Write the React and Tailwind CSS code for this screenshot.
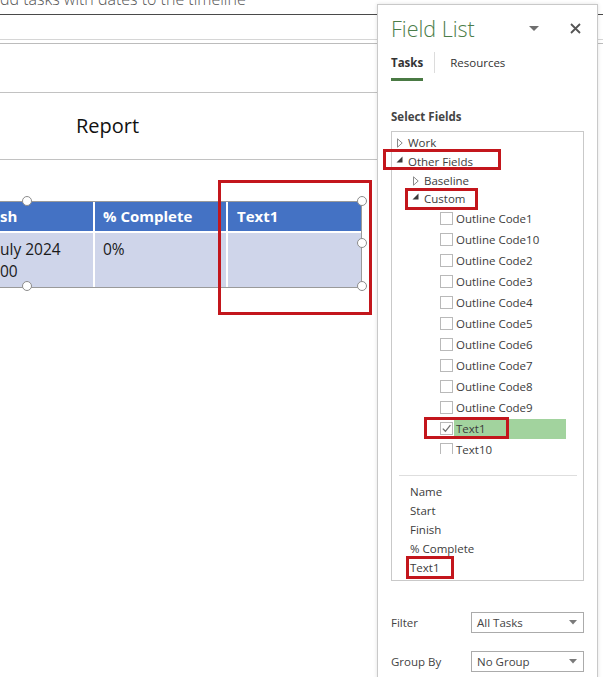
import React from "react";

const Tri = () => (
  <svg width="6" height="10" viewBox="0 0 6 10" className="block">
    <path d="M0.5 0.8 L5.2 5 L0.5 9.2 Z" fill="white" stroke="#8a8a8a" strokeWidth="1" />
  </svg>
);
const TriDown = () => (
  <svg width="7" height="7" viewBox="0 0 7 7" className="block">
    <polygon points="6.5,0.5 6.5,6.5 0.5,6.5" fill="#3a3a3a" />
  </svg>
);

const Check = ({ checked }) => (
  <div className="w-[13px] h-[13px] border border-[#b9b9b9] bg-white flex items-center justify-center shrink-0">
    {checked && (
      <svg width="11" height="11" viewBox="0 0 11 11">
        <path d="M1.8 5.6 L4.4 8.3 L9.4 2.2" fill="none" stroke="#6f6f6f" strokeWidth="1.3" />
      </svg>
    )}
  </div>
);

const RedBox = ({ className }) => (
  <div className={"absolute border-[3px] border-[#c3161c] pointer-events-none z-10 " + className} />
);

const Handle = ({ className }) => (
  <div className={"absolute w-[10px] h-[10px] rounded-full bg-white border border-[#8c8c8c] " + className} />
);

function Selector({ label, value }) {
  return (
    <div className="flex items-center">
      <div className="w-[80px] text-[11.5px] text-[#444]">{label}</div>
      <div className="w-[113px] h-[21px] border border-[#ababab] flex items-center pl-[5px] pr-[6px]">
        <span className="text-[11.5px] text-[#444]">{value}</span>
        <svg className="ml-auto" width="8" height="5" viewBox="0 0 8 5">
          <polygon points="0,0 8,0 4,4.5" fill="#7a7a7a" />
        </svg>
      </div>
    </div>
  );
}

export default function App() {
  const codes = [
    "Outline Code1",
    "Outline Code10",
    "Outline Code2",
    "Outline Code3",
    "Outline Code4",
    "Outline Code5",
    "Outline Code6",
    "Outline Code7",
    "Outline Code8",
    "Outline Code9",
  ];
  return (
    <div className="w-[603px] h-[677px] overflow-hidden bg-white flex font-['Open_Sans',sans-serif]">
      {/* Left document area */}
      <div className="w-[377px] shrink-0 relative flex flex-col">
        <div className="h-[15px] overflow-hidden border-b border-[#4a4a4a]">
          <div className="mt-[-11px] text-[16px] leading-[20px] font-light text-[#555] whitespace-nowrap">
            dd tasks with dates to the timeline
          </div>
        </div>
        <div className="h-[24px]" />
        <div className="h-[5px] border-t border-b border-t-[#d6d6d6] border-b-[#bcbcbc]" />
        <div className="h-[48px]" />
        <div className="h-[67px] border-t border-[#c2c2c2] flex items-center pl-[76px]">
          <span className="text-[20px] text-[#111]">Report</span>
        </div>
        <div className="border-t border-[#c2c2c2] pt-[41px]">
          <div className="relative w-[362px] border border-l-0 border-[#9a9a9a] bg-white">
            <div className="flex gap-[2px] h-[29px]">
              <div className="w-[93px] bg-[#4472c4] text-white font-bold text-[15px] flex items-center">sh</div>
              <div className="w-[131px] bg-[#4472c4] text-white font-bold text-[15px] flex items-center pl-[8px]">% Complete</div>
              <div className="w-[133px] bg-[#4472c4] text-white font-bold text-[15px] flex items-center pl-[9px]">Text1</div>
            </div>
            <div className="flex gap-[2px] h-[54px] mt-[2px]">
              <div className="w-[93px] bg-[#cfd5ea] text-[#1a1a1a] text-[15.5px] leading-[22px] pt-[5px] whitespace-nowrap">
                uly 2024
                <br />
                00
              </div>
              <div className="w-[131px] bg-[#cfd5ea] text-[#1a1a1a] text-[15.5px] leading-[22px] pt-[5px] pl-[8px]">0%</div>
              <div className="w-[133px] bg-[#cfd5ea]" />
            </div>
            <Handle className="left-[22px] top-[-6px]" />
            <Handle className="left-[357px] top-[-6px]" />
            <Handle className="left-[357px] top-[36px]" />
            <Handle className="left-[357px] top-[79px]" />
            <Handle className="left-[22px] top-[79px]" />
          </div>
        </div>
        <RedBox className="left-[218px] top-[180px] w-[154px] h-[135px]" />
      </div>

      {/* Field list panel */}
      <div className="w-[221px] h-[700px] shrink-0 mt-[4px] border-l border-t border-r border-[#c9c9c9] bg-white shadow-[0_0_4px_rgba(0,0,0,0.12)] pl-[13px] flex flex-col relative z-20">
        <div className="h-[47px] flex items-center pr-[16px]">
          <span className="text-[21.5px] font-light text-[#4b7d49] leading-none">Field List</span>
          <svg className="ml-auto" width="10" height="6" viewBox="0 0 10 6">
            <polygon points="0,0 10,0 5,5" fill="#6f6f6f" />
          </svg>
          <svg className="ml-[31px]" width="11" height="11" viewBox="0 0 11 11">
            <path d="M1 1 L10 10 M10 1 L1 10" stroke="#555" strokeWidth="1.8" />
          </svg>
        </div>
        <div className="h-[30px] flex items-start">
          <div className="flex flex-col">
            <div className="h-[20px] mt-[1px] leading-[20px] text-[11.5px] font-bold text-[#333]">Tasks</div>
            <div className="h-[3px] mt-[5px] bg-[#4a7a44] w-[32px]" />
          </div>
          <div className="w-px h-[21px] bg-[#dcdcdc] ml-[11px]" />
          <div className="h-[20px] mt-[1px] leading-[20px] text-[11.5px] text-[#333] ml-[15px]">Resources</div>
        </div>
        <div className="mt-[25px] h-[20px] leading-[20px] text-[11.5px] font-bold text-[#444]">Select Fields</div>
        <div className="mt-[4px] w-[193px] h-[450px] border border-[#c9c9c9] flex flex-col">
          <div className="h-[322px] overflow-y-clip pt-[1px] text-[11.5px] text-[#3c3c3c]">
            <div className="h-[19px] flex items-center relative">
              <div className="ml-[5px] w-[11px]"><Tri /></div>
              <span>Work</span>
            </div>
            <div className="h-[19px] flex items-center relative">
              <div className="ml-[4px] w-[12px] mt-[-5px]"><TriDown /></div>
              <span>Other Fields</span>
              <RedBox className="left-[-9px] top-[-3px] w-[118px] h-[21px]" />
            </div>
            <div className="h-[19px] flex items-center relative">
              <div className="ml-[21px] w-[11px]"><Tri /></div>
              <span>Baseline</span>
            </div>
            <div className="h-[18px] flex items-center relative">
              <div className="ml-[20px] w-[12px] mt-[-5px]"><TriDown /></div>
              <span>Custom</span>
              <RedBox className="left-[13px] top-[-2px] w-[73px] h-[22px]" />
            </div>
            {codes.map((c) => (
              <div key={c} className="h-[21px] flex items-center">
                <div className="ml-[48px]"><Check /></div>
                <span className="ml-[3px]">{c}</span>
              </div>
            ))}
            <div className="h-[21px] flex items-center relative">
              <div className="ml-[48px]"><Check checked /></div>
              <div className="ml-[1px] w-[112px] h-[20px] bg-[#a2d39e] flex items-center pl-[2px]">Text1</div>
              <RedBox className="left-[32px] top-[-1px] w-[85px] h-[22px]" />
            </div>
            <div className="h-[21px] flex items-center">
              <div className="ml-[48px]"><Check /></div>
              <span className="ml-[3px]">Text10</span>
            </div>
          </div>
          <div className="mt-[21px] h-px bg-[#dedede] ml-[7px] mr-[6px]" />
          <div className="pt-[6px] text-[11.5px] text-[#3c3c3c]">
            <div className="h-[19px] leading-[19px] pl-[18px]">Name</div>
            <div className="h-[19px] leading-[19px] pl-[18px]">Start</div>
            <div className="h-[19px] leading-[19px] pl-[18px]">Finish</div>
            <div className="h-[19px] leading-[19px] pl-[18px]">% Complete</div>
            <div className="h-[19px] leading-[19px] pl-[18px] relative">
              Text1
              <RedBox className="left-[14px] top-[-2px] w-[48px] h-[23px]" />
            </div>
          </div>
        </div>
        <div className="mt-[31px]">
          <Selector label="Filter" value="All Tasks" />
        </div>
        <div className="mt-[18px]">
          <Selector label="Group By" value="No Group" />
        </div>
      </div>

      {/* right sliver of the document behind the panel */}
      <div className="w-[5px] shrink-0 flex flex-col">
        <div className="h-[15px] border-b border-[#4a4a4a]" />
        <div className="h-[24px]" />
        <div className="h-[5px] border-t border-b border-t-[#d6d6d6] border-b-[#bcbcbc]" />
      </div>
    </div>
  );
}
